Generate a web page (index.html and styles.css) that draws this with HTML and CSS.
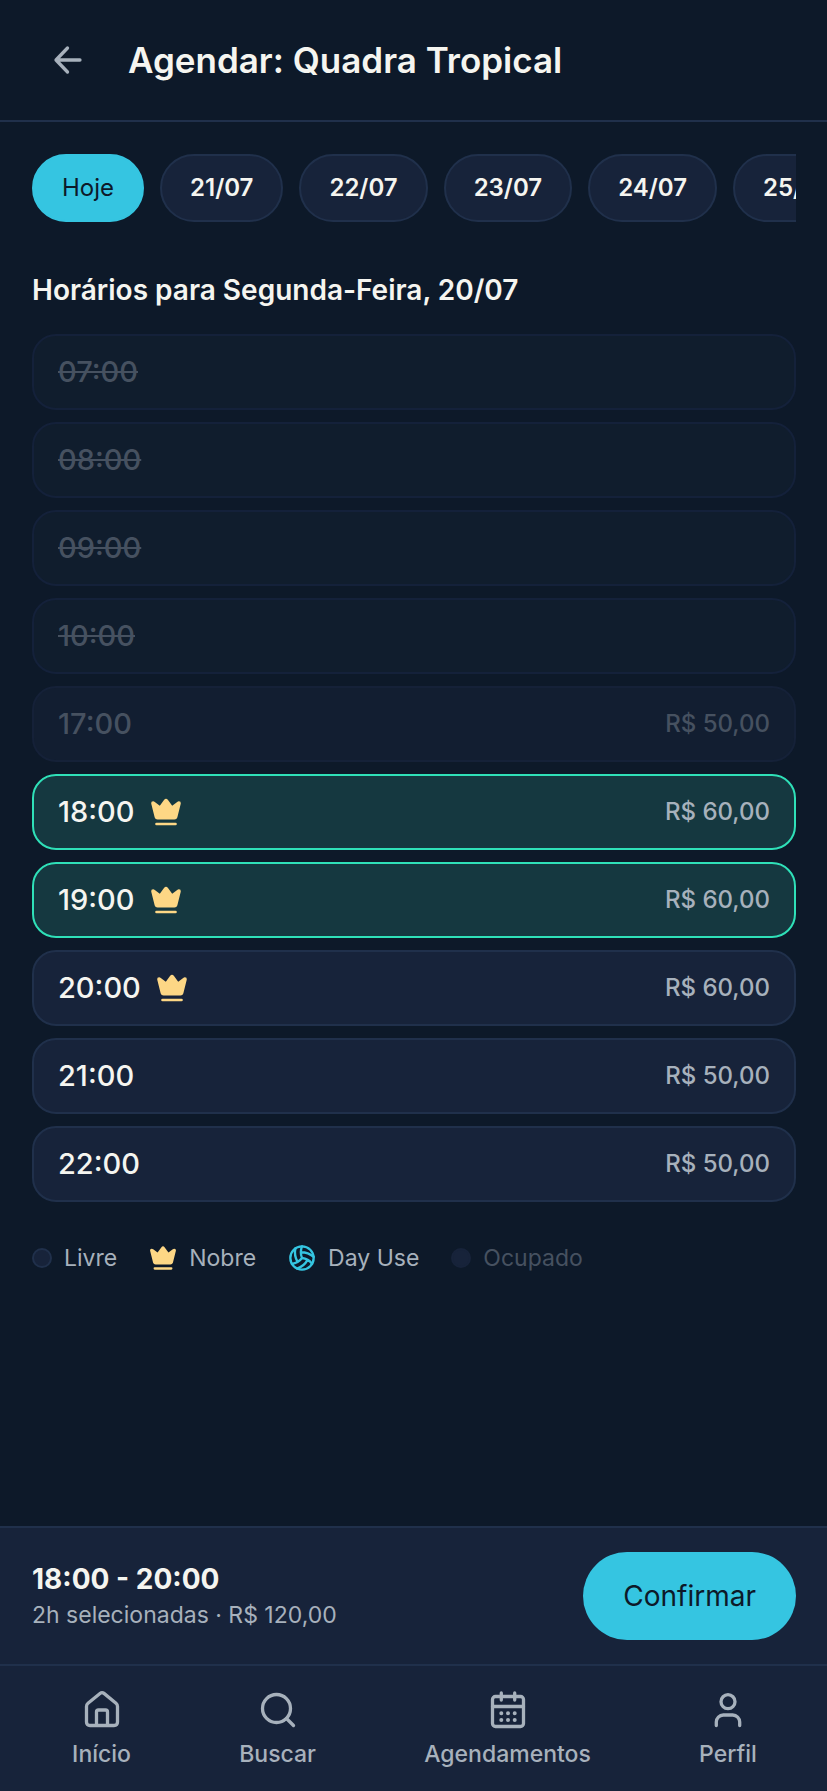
FILE: index.html
```html
<!DOCTYPE html>
<html lang="pt-BR">
<head>
<meta charset="utf-8">
<meta name="viewport" content="width=device-width, initial-scale=1">
<title>Agendar: Quadra Tropical</title>
<link rel="stylesheet" href="styles.css">
</head>
<body>
<svg class="sprite" aria-hidden="true">
  <symbol id="crown" viewBox="0 0 32 32">
    <path d="M1.200 7.500 Q1 5.200 3.200 5.300 Q4 5.400 4.800 6.100 L9.800 9.800 L14 4 Q16 1.400 18 4 L22.200 9.800 L27.200 6.100 Q28 5.400 28.800 5.300 Q31 5.200 30.800 7.500 L27.300 21.500 Q26.700 23.500 24.500 23.500 H7.500 Q5.300 23.500 4.700 21.500 Z" fill="currentColor"/>
    <path d="M6.500 28 H25.500" fill="none" stroke="currentColor" stroke-width="2.600" stroke-linecap="round"/>
  </symbol>
</svg>
<div class="app">
  <header class="header">
    <button class="back" type="button" aria-label="Voltar">
      <svg viewBox="0 0 32 32" class="icon-back"><path d="M28 16H4M15.500 4L4 16l11.500 12"/></svg>
    </button>
    <h1 class="title">Agendar: Quadra Tropical</h1>
  </header>
  <main class="content">
    <div class="dates">
      <button class="chip chip-active" type="button">Hoje</button>
      <button class="chip" type="button">21/07</button>
      <button class="chip" type="button">22/07</button>
      <button class="chip" type="button">23/07</button>
      <button class="chip" type="button">24/07</button>
      <button class="chip" type="button">25/07</button>
    </div>
    <h2 class="subtitle">Horários para Segunda-Feira, 20/07</h2>
    <div class="slots">
      <button class="slot slot-busy" type="button" disabled><s>07:00</s></button>
      <button class="slot slot-busy" type="button" disabled><s>08:00</s></button>
      <button class="slot slot-busy" type="button" disabled><s>09:00</s></button>
      <button class="slot slot-busy" type="button" disabled><s>10:00</s></button>
      <button class="slot slot-past" type="button" disabled><span>17:00</span><span class="price">R$ 50,00</span></button>
      <button class="slot slot-selected" type="button"><span>18:00</span><svg class="crown"><use href="#crown"/></svg><span class="price">R$ 60,00</span></button>
      <button class="slot slot-selected" type="button"><span>19:00</span><svg class="crown"><use href="#crown"/></svg><span class="price">R$ 60,00</span></button>
      <button class="slot" type="button"><span>20:00</span><svg class="crown"><use href="#crown"/></svg><span class="price">R$ 60,00</span></button>
      <button class="slot" type="button"><span>21:00</span><span class="price">R$ 50,00</span></button>
      <button class="slot" type="button"><span>22:00</span><span class="price">R$ 50,00</span></button>
    </div>
    <ul class="legend">
      <li><span class="dot"></span>Livre</li>
      <li><svg class="crown crown-small"><use href="#crown"/></svg>Nobre</li>
      <li><svg class="ball" viewBox="0 0 24 24"><circle cx="12" cy="12" r="10"/><path d="M11.100 7.100a16.550 16.550 0 0 1 10.900 4M12 12a12.600 12.600 0 0 1-8.700 5M16.800 13.600a16.550 16.550 0 0 1-9 7.500M20.700 17a12.800 12.800 0 0 0-8.700-5 13.300 13.300 0 0 1 0-10M6.300 3.800a16.550 16.550 0 0 0 1.900 11.500"/></svg>Day Use</li>
      <li class="legend-busy"><span class="dot"></span>Ocupado</li>
    </ul>
  </main>
  <footer class="footer">
    <div class="summary">
      <div>
        <p class="summary-time">18:00 - 20:00</p>
        <p class="summary-info">2h selecionadas · R$ 120,00</p>
      </div>
      <button class="confirm" type="button">Confirmar</button>
    </div>
    <nav class="nav">
      <a href="#"><svg viewBox="0 0 40 40"><path d="M4.500 16.500 Q4.500 14.500 6 13.300 L18 3.400 Q20 1.800 22 3.400 L34 13.300 Q35.500 14.500 35.500 16.500 V32 Q35.500 35.500 32 35.500 H8 Q4.500 35.500 4.500 32 ZM14.500 35.500V22Q14.500 20 16.500 20h7q2 0 2 2v13.500"/></svg>Início</a>
      <a href="#"><svg viewBox="0 0 40 40"><circle cx="18.500" cy="18.500" r="14"/><path d="M28.500 28.500 L35.500 35.500"/></svg>Buscar</a>
      <a href="#"><svg viewBox="0 0 40 40"><rect x="4.500" y="6.500" width="31" height="30" rx="3"/><path d="M13.300 3v7M26.700 3v7M4.500 16.500h31"/><path class="dots" d="M13.300 23.200h.01M20 23.200h.01M26.700 23.200h.01M13.300 30h.01M20 30h.01M26.700 30h.01"/></svg>Agendamentos</a>
      <a href="#"><svg viewBox="0 0 40 40"><circle cx="20" cy="11.700" r="7"/><path d="M8.300 35.500V32a7 7 0 0 1 7-7h9.400a7 7 0 0 1 7 7v3.500"/></svg>Perfil</a>
    </nav>
  </footer>
</div>
</body>
</html>
```

FILE: styles.css
```css
* { box-sizing: border-box; }
body, h1, h2, p, ul { margin: 0; padding: 0; }
body {
  background: #0d1929;
  color: #f5f5f0;
  font-family: Inter, "Liberation Sans", sans-serif;
  font-size: 24px;
  line-height: 32px;
}
button { font: inherit; color: inherit; cursor: pointer; }
svg { display: block; flex: none; }
.sprite { display: none; }
.app { display: flex; flex-direction: column; min-height: 100vh; }

.header {
  display: flex;
  align-items: center;
  gap: 24px;
  padding: 24px 32px;
  border-bottom: 2px solid #20304b;
}
.back {
  display: flex;
  align-items: center;
  justify-content: center;
  width: 72px;
  height: 72px;
  padding: 0;
  border: 0;
  background: none;
  color: #a7b1bc;
}
.icon-back {
  width: 32px;
  height: 32px;
  fill: none;
  stroke: currentColor;
  stroke-width: 3.3;
  stroke-linecap: round;
  stroke-linejoin: round;
}
.title { font-size: 35px; line-height: 44px; font-weight: 600; }

.content { flex: 1; padding: 32px 31px 32px 32px; }
.dates { display: flex; gap: 16px; overflow: hidden; }
.chip {
  flex: none;
  height: 68px;
  padding: 0 28px;
  border: 2px solid #20304b;
  border-radius: 34px;
  background: #17233a;
  font-weight: 600;
}
.chip-active {
  border-color: #35c5e1;
  background: #35c5e1;
  color: #0d1929;
  font-weight: 400;
}
.subtitle { margin: 50px 0 26px; font-size: 28px; line-height: 36px; font-weight: 600; }

.slots { display: flex; flex-direction: column; gap: 12px; }
.slot {
  display: flex;
  align-items: center;
  gap: 15px;
  height: 76px;
  padding: 0 24px;
  border: 2px solid #20304b;
  border-radius: 24px;
  background: #17233a;
  font-size: 29px;
  font-weight: 500;
}
.slot:disabled { color: #465160; cursor: default; }
.slot-busy { border-color: #14213a; background: #101d2d; }
.slot-past { border-color: #152138; background: #121e31; }
.slot-selected { border-color: #2fe0b8; background: #153840; }
.price { margin-left: auto; font-size: 24px; color: #a7b1bc; }
.slot:disabled .price { color: inherit; }
.crown { width: 32px; height: 32px; color: #fdd785; }

.legend {
  display: flex;
  flex-wrap: wrap;
  gap: 32px;
  margin-top: 40px;
  list-style: none;
  color: #a7b1bc;
  font-size: 23px;
}
.legend li { display: flex; align-items: center; gap: 12px; }
.dot {
  width: 20px;
  height: 20px;
  border: 2px solid #20304b;
  border-radius: 50%;
  background: #17233a;
}
.crown-small { width: 28px; height: 28px; }
.ball {
  width: 28px;
  height: 28px;
  fill: none;
  stroke: #35c5e1;
  stroke-width: 2;
  stroke-linecap: round;
}
.legend-busy { color: #465160; }
.legend-busy .dot { border-color: #17233a; }

.footer { background: #17233a; }
.summary {
  display: flex;
  align-items: center;
  justify-content: space-between;
  padding: 24px 31px 24px 32px;
  border-top: 2px solid #20304b;
}
.summary-time { font-size: 28px; line-height: 36px; font-weight: 700; }
.summary-info { margin-top: 2px; color: #a7b1bc; font-size: 23px; }
.confirm {
  height: 88px;
  padding: 0 40px;
  border: 0;
  border-radius: 44px;
  background: #35c5e1;
  color: #0d1929;
  font-size: 28px;
  font-weight: 400;
}
.nav {
  display: flex;
  justify-content: space-around;
  padding: 24px 16px 21px 18px;
  border-top: 2px solid #20304b;
}
.nav a {
  display: flex;
  flex-direction: column;
  align-items: center;
  gap: 8px;
  color: #a7b1bc;
  font-size: 23px;
  font-weight: 500;
  text-decoration: none;
}
.nav svg {
  width: 40px;
  height: 40px;
  fill: none;
  stroke: currentColor;
  stroke-width: 3.3;
  stroke-linecap: round;
  stroke-linejoin: round;
}
.nav .dots { stroke-width: 4; }
```
